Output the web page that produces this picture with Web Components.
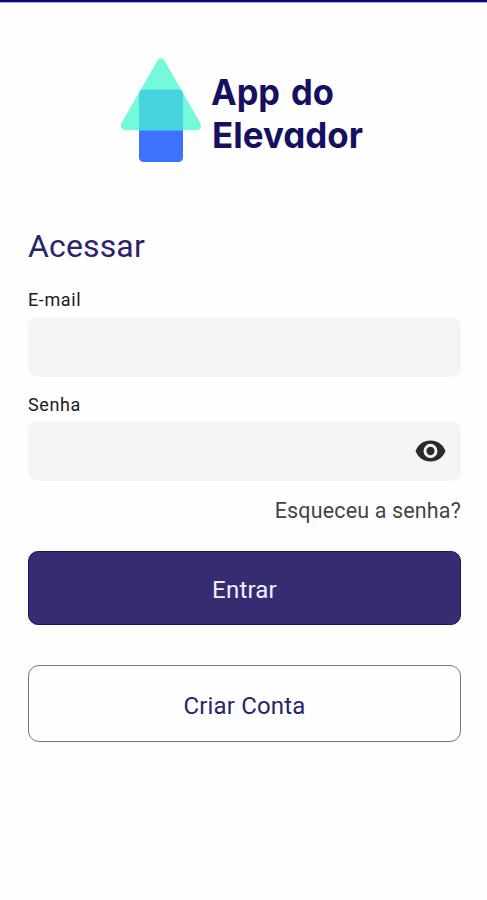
<!DOCTYPE html>
<html lang="pt-BR">
<head>
<meta charset="utf-8">
<title>App do Elevador</title>
<style>
html, body { margin: 0; background: #fefefe; }
body { font-family: Roboto, "Liberation Sans", sans-serif; }
</style>
</head>
<body>
<login-screen></login-screen>
<script>
const define = (name, html) => {
  const template = document.createElement('template');
  template.innerHTML = html;
  customElements.define(name, class extends HTMLElement {
    constructor() {
      super();
      this.attachShadow({ mode: 'open' }).append(template.content.cloneNode(true));
    }
  });
};

define('brand-logo', `
<style>
:host { display: block; height: 110px; }
svg { display: block; margin: 0 auto; }
text { font-family: Inter, "Open Sans", sans-serif; font-weight: 700; font-size: 36px; fill: #15105f; font-feature-settings: "cv11" 1, "ss03" 1; }
</style>
<svg width="253" height="110" viewBox="118 55 253 110" role="img" aria-label="App do Elevador">
  <rect x="139" y="89.5" width="44" height="72.5" rx="4.5" fill="#3d72ff"/>
  <path d="M157.5 60.5Q161 56 164.500 60.500L200.500 123.500Q202.500 129.500 197 130.200H125Q119.500 129.500 121.200 123.500Z" fill="#74fadb"/>
  <path d="M143.500 89.500H178.500Q183 89.500 183 94V130.200H139V94Q139 89.500 143.500 89.500Z" fill="#45d3dd"/>
  <text x="211" y="104.500" textLength="69" lengthAdjust="spacingAndGlyphs">App</text>
  <text x="291" y="104.500" textLength="43" lengthAdjust="spacingAndGlyphs">do</text>
  <text x="212" y="147.500" textLength="151" lengthAdjust="spacingAndGlyphs">Elevador</text>
</svg>`);

define('text-field', `
<style>
:host { display: block; }
label { display: block; font-size: 18px; line-height: 22px; height: 28px; letter-spacing: .6px; color: #1b1b1b; }
:host(.password) label { line-height: 23px; }
.box { display: flex; align-items: center; justify-content: flex-end; box-sizing: border-box; height: 60px; padding-right: 15px; border-radius: 9px; background: #f3f5f7; }
</style>
<label><slot></slot></label><div class="box"><slot name="action"></slot></div>`);

define('eye-icon', `
<style>:host { display: block; } svg { display: block; }</style>
<svg width="31" height="22" viewBox="0 0 32 22" preserveAspectRatio="none">
  <path d="M.5 11C3.200 4.500 9 .5 16 .5S28.800 4.500 31.500 11C28.800 17.500 23 21.500 16 21.500S3.200 17.500 .5 11Z" fill="#2b2b2d"/>
  <circle cx="16" cy="11" r="5.700" fill="#2b2b2d" stroke="#f3f5f7" stroke-width="3"/>
</svg>`);

define('action-button', `
<style>
:host { display: block; }
button { display: flex; align-items: center; justify-content: center; box-sizing: border-box; width: 100%; height: 74px; margin: 0; padding: 3px 0 0; font: inherit; font-size: 24px; letter-spacing: .2px; color: #f1efff; background: #352c72; border: 1.500px solid #1d1363; border-radius: 10px; }
:host([outline]) button { height: 77px; padding-top: 5px; letter-spacing: .15px; background: #fefefe; color: #2b236b; border: 1px solid #77777f; border-radius: 11px; }
</style>
<button type="button"><slot></slot></button>`);

define('login-screen', `
<style>
:host { display: block; box-sizing: border-box; height: 900px; background: #fefefe; overflow: hidden; }
.status { height: 2px; background: #08087c; border-bottom: 1px solid #b2b2dc; }
main { display: flex; flex-direction: column; padding: 52px 26px 0 28px; }
h1 { margin: 61px 0 0; height: 63px; line-height: 40px; font-size: 32px; font-weight: 400; letter-spacing: .15px; color: #2b236b; }
.password { margin-top: 16px; }
a { align-self: flex-end; margin-top: 15px; height: 55px; line-height: 30px; font-size: 21.500px; letter-spacing: .15px; color: #444446; }
[outline] { margin-top: 40px; }
</style>
<div class="status"></div>
<main>
  <brand-logo></brand-logo>
  <h1>Acessar</h1>
  <text-field>E-mail</text-field>
  <text-field class="password">Senha<eye-icon slot="action"></eye-icon></text-field>
  <a>Esqueceu a senha?</a>
  <action-button>Entrar</action-button>
  <action-button outline>Criar Conta</action-button>
</main>`);
</script>
</body>
</html>
